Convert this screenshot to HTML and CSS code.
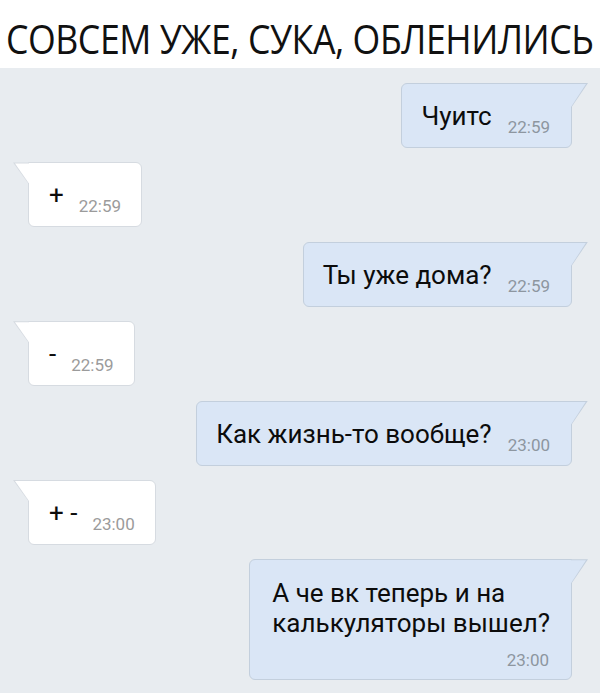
FILE: index.html
```html
<!DOCTYPE html>
<html lang="ru">
<head>
    <meta charset="UTF-8">
    <meta name="viewport" content="width=device-width, initial-scale=1.0">
    <title>Обленились</title>
    <link rel="stylesheet" href="styles.css">
</head>
<body>
    <div class="header">
        <h1 class="title">СОВСЕМ УЖЕ, СУКА, ОБЛЕНИЛИСЬ</h1>
    </div>

    <div class="chat">
        <div class="msg out">
            <span class="text">Чуитс</span><span class="time">22:59</span>
        </div>
        <div class="msg in">
            <span class="text">+</span><span class="time">22:59</span>
        </div>
        <div class="msg out">
            <span class="text">Ты уже дома?</span><span class="time">22:59</span>
        </div>
        <div class="msg in">
            <span class="text">-</span><span class="time">22:59</span>
        </div>
        <div class="msg out">
            <span class="text">Как жизнь-то вообще?</span><span class="time">23:00</span>
        </div>
        <div class="msg in">
            <span class="text">+ -</span><span class="time">23:00</span>
        </div>
        <div class="msg out multi">
            <div class="text">А че вк теперь и на<br>калькуляторы вышел?</div>
            <div class="time">23:00</div>
        </div>
    </div>
</body>
</html>
```

FILE: styles.css
```css
html, body {
    margin: 0;
    padding: 0;
}

body {
    width: 600px;
    height: 693px;
    overflow: hidden;
    background-color: #e8ecf0;
    font-family: Roboto, "Noto Sans", sans-serif;
    color: #0c0c0c;
}

.header {
    height: 68px;
    background-color: #ffffff;
    display: flex;
    align-items: center;
    justify-content: center;
    overflow: hidden;
}

.title {
    margin: 0;
    font-family: "Open Sans", "Noto Sans", sans-serif;
    font-weight: 400;
    font-size: 41px;
    line-height: 1;
    color: #111;
    white-space: nowrap;
    padding-top: 8px;
    letter-spacing: -0.5px;
    transform: scaleX(0.87);
}

.chat {
    display: flex;
    flex-direction: column;
    gap: 14.4px;
    padding: 15px 28px 0 28px;
}

/* пузырь сообщения */
.msg {
    position: relative;
    border: 1px solid #d6dbe1;
    border-radius: 6px;
    padding: 17px 20px 11px 20px;
    font-size: 26px;
    line-height: 30px;
    white-space: nowrap;
}

.msg.out {
    align-self: flex-end;
    background-color: #dae6f6;
    border-color: #c3cfdd;
    border-top-right-radius: 0;
    padding-left: 19px;
    padding-right: 21px;
}

.msg.in {
    align-self: flex-start;
    background-color: #ffffff;
    border-top-left-radius: 0;
}

.time {
    display: inline-block;
    font-size: 17px;
    line-height: 17px;
    vertical-align: -8px;
    margin-left: 16px;
    color: #8d96a0;
}

.msg.in .time {
    color: #9b9b9b;
    margin-left: 15px;
}

/* хвостик */
.msg::before,
.msg::after {
    content: "";
    position: absolute;
    top: -1px;
    width: 17px;
    height: 25px;
}

.msg.out::before {
    right: -17px;
    background-color: #c3cfdd;
    clip-path: polygon(0 0, 100% 0, 0 100%);
}

.msg.out::after {
    right: -15px;
    top: 0;
    width: 15px;
    height: 23px;
    background-color: #dae6f6;
    clip-path: polygon(0 0, 100% 0, 0 100%);
}

.msg.in::before {
    left: -16px;
    width: 16px;
    height: 22px;
    background-color: #d6dbe1;
    clip-path: polygon(0 0, 100% 0, 100% 100%);
}

.msg.in::after {
    left: -14px;
    top: 0;
    width: 14px;
    height: 20px;
    background-color: #ffffff;
    clip-path: polygon(0 0, 100% 0, 100% 100%);
}

.msg.multi {
    padding-top: 18px;
    padding-bottom: 10px;
    padding-left: 22px;
}

.msg.multi .text {
    display: block;
}

.msg.multi .time {
    display: block;
    text-align: right;
    margin-left: 0;
    margin-top: 14px;
    margin-right: 1px;
}
```
